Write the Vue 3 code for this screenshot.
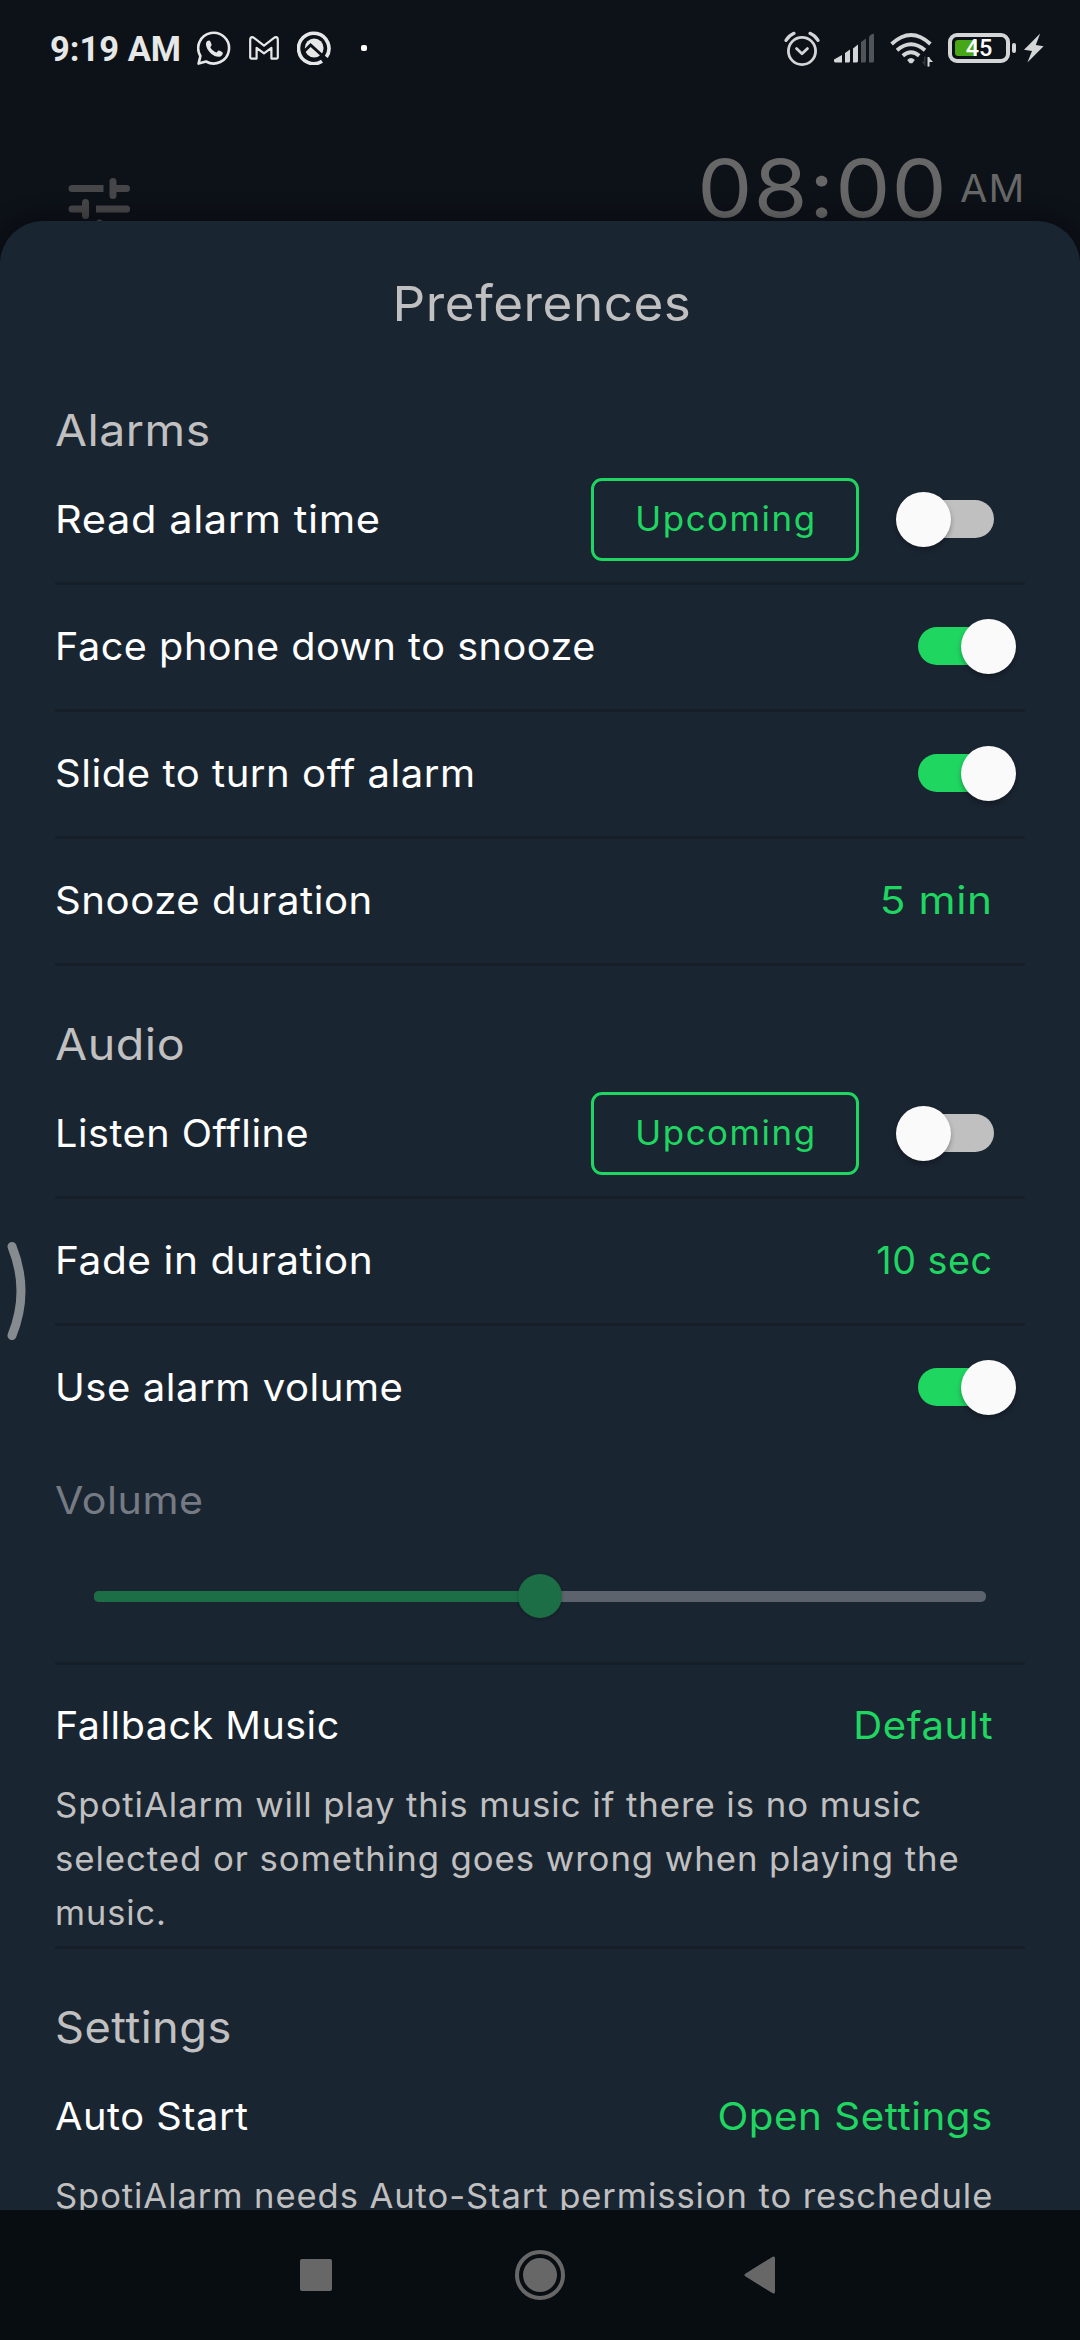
<script setup>
// `sx` is the horizontal stretch of each label.
const alarmRows = [
  { label: 'Read alarm time', sx: 1.082, upcoming: true, on: false },
  { label: 'Face phone down to snooze', sx: 1.029, on: true },
  { label: 'Slide to turn off alarm', sx: 1.041, on: true },
  { label: 'Snooze duration', sx: 1.043, value: '5 min', vsx: 1.1 },
]
const audioRows = [
  { label: 'Listen Offline', sx: 1.029, upcoming: true, on: false },
  { label: 'Fade in duration', sx: 1.056, value: '10 sec', vsx: 0.98 },
  { label: 'Use alarm volume', sx: 1.041, on: true, last: true },
]
const groups = [
  { title: 'Alarms', sx: 1.054, rows: alarmRows },
  { title: 'Audio', sx: 1.059, rows: audioRows },
]
const fallbackText = [
  { text: 'SpotiAlarm will play this music if there is no music', sx: 1.032 },
  { text: 'selected or something goes wrong when playing the', sx: 1.032 },
  { text: 'music.', sx: 1.018 },
]
const volume = 50
const stretch = (n) => ({ transform: 'scaleX(' + n + ')' })
</script>

<template>
  <div class="screen">
    <header class="status">
      <span class="clock">9:19 AM</span>
      <svg class="whatsapp" width="34" height="34" viewBox="0 0 34 34">
        <path d="M1.6 32.6 3.4 25A15.4 15.4 0 1 1 9 30.5Z" fill="none" stroke="#e6e7e7" stroke-width="2.6" stroke-linejoin="round" />
        <path d="M9.2 11.6c.6-1.6 2.2-2.3 3.5-1.9.7.4 1.4 2.6 1.9 4 .2.9-1.3 2-1.2 2.6 1 2.3 3.3 4.2 5.8 5.2.9.1 1.7-2.1 2.5-2 1.2.3 3.3 1.3 4 2 .5 1.4-.7 3.3-2.3 3.9-2.7 1-6.6-.5-9.5-3-2.9-2.6-5.700-7.200-4.700-10.800Z" fill="#e6e7e7" />
      </svg>
      <svg class="gmail" width="30" height="24" viewBox="0 0 30 24">
        <path d="M1.2 3.6Q1.2 1.2 3 1.2L4.3 1.4 15 9.6 25.7 1.4 27 1.2Q28.8 1.2 28.8 3.6V21Q28.8 22.6 27.2 22.6H22.4V11.8L15 17.4 7.6 11.8V22.6H2.8Q1.2 22.6 1.2 21Z" fill="none" stroke="#e6e7e7" stroke-width="2.2" stroke-linejoin="round" />
      </svg>
      <svg class="blocked" width="34" height="34" viewBox="0 0 34 34">
        <path d="M25 30.2A15.2 15.2 0 1 1 29.3 26" fill="none" stroke="#e6e7e7" stroke-width="3.6" />
        <circle cx="17.2" cy="17" r="9.4" fill="#e6e7e7" />
        <path d="M7 20.5 13.6 14 28.500 27.500" fill="none" stroke="#0d1118" stroke-width="3" />
      </svg>
      <i class="dot"></i>
      <svg class="alarm" width="36" height="35" viewBox="0 0 36 35" fill="none" stroke="#d3d5d6">
        <circle cx="18" cy="20" r="13.6" stroke-width="2.8" />
        <path d="M12.500 17.600 18 22.800 23.500 17.600" stroke-width="2.8" stroke-linecap="round" stroke-linejoin="round" />
        <path d="M2 9.300Q5 4.500 10 2.300M34 9.300Q31 4.500 26 2.300" stroke-width="3.2" stroke-linecap="round" />
      </svg>
      <svg class="signal" width="40" height="30" viewBox="0 0 40 30">
        <path d="M0 26.500 8 22V29.500H1.500Q0 29.500 0 28ZM11 20 16 16.500V28.500L15 29.500H11ZM19 15.500 24 11.500V28.500L23 29.500H19Z" fill="#d3d5d6" />
        <path d="M27 9 32 5.500V28.500L31 29.500H27ZM35 4.500Q35 2 40 0.500V28.500L39 29.500H35Z" fill="#505357" />
      </svg>
      <svg class="wifi" width="44" height="34" viewBox="0 0 44 34" fill="none" stroke="#d3d5d6" stroke-width="3.8">
        <path d="M1.600 11Q21 -7 40.400 11" />
        <path d="M7 17.200Q21 5.200 35 17.200" />
        <path d="M12.800 22.800Q21 15.800 29.200 22.800" />
        <path d="M17.200 27Q21 22.800 24.800 27L22.300 30.300H19.700Z" fill="#d3d5d6" stroke="none" />
        <path d="M38.500 24V33.600" stroke-width="2" />
        <path d="M38.500 24 43 29H38.500Z" fill="#d3d5d6" stroke="none" />
        <path d="M35.500 23.500V33.500L31.500 28.600H34V23.500Z" fill="#33373c" stroke="none" />
      </svg>
      <div class="battery"><i class="charge"></i><span>45</span></div>
      <i class="tip"></i>
      <svg class="bolt" width="20" height="30" viewBox="0 0 20 30">
        <path d="M16.200.5 0 16.800 8 18 3.400 29.500 19.600 13.200 11.800 12Z" fill="#d3d5d6" />
      </svg>
    </header>

    <div class="backdrop">
      <svg class="tune" width="64" height="64" viewBox="0 0 64 64" fill="none" stroke="#464648" stroke-width="7">
        <path d="M4 10.500H35.500M28 31H58.500" />
        <path d="M4 10.500H4.100M45 3.500V17.500M45 10.500H58.500M17.500 24.500V37.500M4 31H17.500M58.500 31H58.600M31.500 45V58" stroke-linecap="round" />
      </svg>
      <span class="time">08:00</span>
      <span class="ampm">AM</span>
    </div>

    <main class="sheet">
      <h1>Preferences</h1>

      <section v-for="g in groups" :key="g.title">
        <h2 :style="stretch(g.sx)">{{ g.title }}</h2>
        <div v-for="r in g.rows" :key="r.label" class="row" :class="{ last: r.last }">
          <span class="label" :style="stretch(r.sx)">{{ r.label }}</span>
          <button v-if="r.upcoming" class="upcoming"><span>Upcoming</span></button>
          <span v-if="r.value" class="value" :style="stretch(r.vsx)">{{ r.value }}</span>
          <div v-else class="switch" :class="{ on: r.on }"><i></i></div>
        </div>
        <div v-if="g.title === 'Audio'" class="volume">
          <div class="volume-label">Volume</div>
          <div class="track">
            <div class="fill" :style="{ width: volume + '%' }"></div>
            <i class="knob"></i>
          </div>
        </div>
        <div v-if="g.title === 'Audio'" class="fallback">
          <div class="row short">
            <span class="label" :style="stretch(1.025)">Fallback Music</span>
            <span class="value" :style="stretch(1.042)">Default</span>
          </div>
          <p v-for="l in fallbackText" :key="l.text" :style="stretch(l.sx)">{{ l.text }}</p>
        </div>
      </section>

      <section>
        <h2 :style="stretch(1.025)">Settings</h2>
        <div class="row short auto">
          <span class="label" :style="stretch(1.034)">Auto Start</span>
          <span class="value" :style="stretch(1.048)">Open Settings</span>
        </div>
        <p :style="stretch(1.026)">SpotiAlarm needs Auto-Start permission to reschedule</p>
      </section>
    </main>

    <nav class="navbar">
      <i class="recent"></i>
      <svg class="home" width="50" height="50" viewBox="0 0 50 50">
        <circle cx="25" cy="25" r="23" fill="none" stroke="#676767" stroke-width="4" />
        <circle cx="25" cy="25" r="17" fill="#676767" />
      </svg>
      <svg class="back" width="32" height="38" viewBox="0 0 32 38">
        <path d="M2 19 29.500 2V36Z" fill="#676767" stroke="#676767" stroke-width="3" stroke-linejoin="round" />
      </svg>
    </nav>

    <svg class="edge-handle" width="30" height="100" viewBox="0 0 30 100">
      <path d="M12 5.500Q30 50 12 94.500" fill="none" stroke="#858b8f" stroke-width="9" stroke-linecap="round" />
    </svg>
  </div>
</template>

<style>
body {
  background: #0d1118;
}
</style>

<style scoped>
.screen {
  position: relative;
  display: flex;
  flex-direction: column;
  width: 1080px;
  height: 2340px;
  overflow: hidden;
  background: #0d1118;
  font-family: Inter, "Liberation Sans", sans-serif;
}
svg,
i {
  display: block;
  flex: none;
}

/* Status bar */
.status {
  display: flex;
  align-items: center;
  height: 96px;
  flex: none;
}
.clock {
  width: 147px;
  padding: 2px 0 0 50px;
  color: #e6e7e7;
  font: 700 34.5px/40px Roboto, sans-serif;
  white-space: nowrap;
}
.gmail,
.blocked {
  margin-left: 18px;
}
.dot {
  width: 6px;
  height: 6px;
  margin-left: 30px;
  border-radius: 2px;
  background: #fff;
}
.alarm {
  margin-left: auto;
}
.signal {
  margin-left: 14px;
}
.wifi {
  margin: 3px 0 0 16px;
}
.battery {
  position: relative;
  box-sizing: border-box;
  width: 62px;
  height: 30px;
  margin-left: 14px;
  border: 4px solid #d3d5d6;
  border-radius: 9px;
  color: #fff;
  font: 500 23.5px/23px Roboto, sans-serif;
  text-align: center;
}
.battery span {
  position: relative;
}
.charge {
  position: absolute;
  left: 3px;
  top: 3px;
  width: 22px;
  height: 16px;
  border-radius: 3px 0 0 3px;
  background: #48a716;
}
.tip {
  width: 4px;
  height: 10px;
  margin-left: 2px;
  border-radius: 2px;
  background: #d3d5d6;
}
.bolt {
  margin: 0 36px 0 8px;
}

/* Screen behind the sheet */
.backdrop {
  display: flex;
  align-items: center;
  height: 125px;
  flex: none;
  color: #676767;
}
.tune {
  align-self: flex-start;
  margin: 82px 0 0 68px;
}
.time {
  margin: 59px 0 0 auto;
  font-size: 80px;
  line-height: 80px;
  letter-spacing: 1px;
  transform: scaleX(1.095);
  transform-origin: right;
}
.ampm {
  margin: 58px 55px 0 14px;
  font-size: 38.5px;
  line-height: 80px;
  letter-spacing: 1px;
  transform: scaleX(1.03);
  transform-origin: right;
}

/* Sheet */
.sheet {
  position: relative;
  box-sizing: border-box;
  height: 1989px;
  flex: none;
  overflow: hidden;
  padding: 53px 55px 0;
  border-radius: 43px 43px 0 0;
  background: #1a2532;
  box-shadow: 0 0 26px rgba(0, 0, 0, 0.45);
}
h1 {
  margin: 0 0 18px;
  color: #c1c0c0;
  font-size: 48.6px;
  font-weight: 400;
  line-height: 60px;
  letter-spacing: 0.5px;
  text-align: center;
  transform: translateX(2px) scaleX(1.054);
}
h2 {
  margin: 0 0 2px;
  padding-top: 52px;
  color: #c1c0c0;
  font-size: 44px;
  font-weight: 400;
  line-height: 52px;
  letter-spacing: 0.5px;
  transform-origin: left;
}
.row {
  display: flex;
  align-items: center;
  box-sizing: border-box;
  width: 970px;
  height: 127px;
  padding-bottom: 2px;
  border-bottom: 3px solid #161e28;
  color: #fff;
  font-size: 38.5px;
  line-height: 46px;
  letter-spacing: 0.5px;
  white-space: nowrap;
}
.row.last {
  height: 124px;
  border-bottom: 0;
}
.row.short {
  height: 113px;
  padding: 7px 0 0;
  border: 0;
}
.row.auto {
  height: 114px;
  padding-top: 8px;
}
.label {
  margin-right: auto;
  transform-origin: left;
}
.value {
  margin-right: 32px;
  color: #1fd661;
  transform-origin: right;
}
.upcoming {
  box-sizing: border-box;
  width: 268px;
  height: 83px;
  margin: 0 43px 0 0;
  padding: 0 0 0 2px;
  border: 3px solid #1fd661;
  border-radius: 11px;
  background: none;
  color: #1fd661;
  font: 400 33.4px/40px Inter, sans-serif;
  letter-spacing: 1.5px;
}
.upcoming span {
  display: inline-block;
  transform: scaleX(1.043);
}
.switch {
  display: flex;
  align-items: center;
  width: 92px;
  height: 38px;
  margin-right: 31px;
  border-radius: 19px;
  background: #c0c0c0;
}
.switch i {
  width: 55px;
  height: 55px;
  margin: 0 -6px;
  border-radius: 50%;
  background: #fafafa;
  box-shadow: 0 3px 5px rgba(0, 0, 0, 0.3);
}
.switch.on {
  justify-content: flex-end;
  margin-right: 15px;
  background: #1fd661;
}
.volume {
  box-sizing: border-box;
  width: 970px;
  height: 215px;
  padding-top: 27px;
  border-bottom: 3px solid #161e28;
}
.volume-label {
  color: #767b83;
  font-size: 38.5px;
  line-height: 46px;
  letter-spacing: 0.5px;
  transform: scaleX(1.069);
  transform-origin: left;
}
.track {
  position: relative;
  width: 892px;
  height: 11px;
  margin: 68px 0 0 39px;
  border-radius: 5px;
  background: #5d636c;
}
.fill {
  height: 11px;
  border-radius: 5px 0 0 5px;
  background: #1c6e47;
}
.knob {
  position: absolute;
  left: 424px;
  top: -17px;
  width: 44px;
  height: 44px;
  border-radius: 50%;
  background: #1c6e47;
  box-shadow: 0 1px 3px rgba(0, 0, 0, 0.25);
}
.fallback {
  width: 970px;
  padding-bottom: 6px;
  border-bottom: 3px solid #161e28;
}
p {
  margin: 0;
  color: #c1c0c0;
  font-size: 33.7px;
  line-height: 54px;
  letter-spacing: 0.9px;
  white-space: nowrap;
  transform-origin: left;
}

/* Navigation bar */
.navbar {
  position: relative;
  display: flex;
  align-items: center;
  height: 130px;
  flex: none;
  background: #080d11;
}
.recent {
  width: 32px;
  height: 32px;
  margin-left: 300px;
  border-radius: 2px;
  background: #676767;
}
.home {
  margin-left: 183px;
}
.back {
  margin-left: 179px;
}

.edge-handle {
  position: absolute;
  left: 0;
  top: 1241px;
}
</style>
